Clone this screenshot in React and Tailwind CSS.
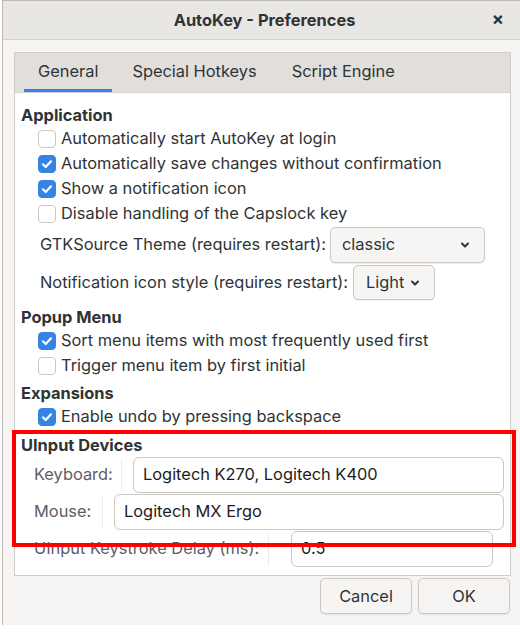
import React, { useState } from 'react';

const Check = ({ checked, onChange, label }) => (
  <label className="flex h-[25px] items-center pl-[17px] cursor-default">
    <span
      onClick={onChange}
      className={`flex h-[18px] w-[18px] items-center justify-center rounded-[4px] border ${
        checked ? 'border-[#3584e4] bg-[#3584e4]' : 'border-[#cdc7c2] bg-white'
      }`}
    >
      {checked && (
        <svg width="12" height="12" viewBox="0 0 12 12" fill="none">
          <path d="M2 6.3 4.7 9 10 3.3" stroke="white" strokeWidth="2.2" strokeLinecap="round" strokeLinejoin="round" />
        </svg>
      )}
    </span>
    <span className="ml-[5px]">{label}</span>
  </label>
);

const Chevron = () => (
  <svg width="12" height="12" viewBox="0 0 12 12" fill="none">
    <path d="M3 4.5 6 7.5 9 4.5" stroke="#2e3436" strokeWidth="2" strokeLinecap="round" strokeLinejoin="round" />
  </svg>
);

const Heading = ({ children, className = '' }) => (
  <div className={`flex h-[22px] items-center font-bold ${className}`}>{children}</div>
);

const Field = ({ label, value, labelW, entryLeft, entryW }) => (
  <div className="flex h-[37px] items-center pl-[13px]">
    <span className={`text-[#5e5c64] ${labelW}`}>{label}</span>
    <span className="h-[32px] w-px bg-[#ebebeb]" />
    <div
      className={`flex h-[36px] items-center rounded-[6px] border border-[#cdc7c2] bg-white px-[9px] text-[#1c1c1c] ${entryLeft} ${entryW}`}
    >
      {value}
    </div>
  </div>
);

export default function App() {
  const [opts, setOpts] = useState({
    autostart: false,
    autosave: true,
    notify: true,
    capslock: false,
    sortMenu: true,
    firstInitial: false,
    undo: true,
  });
  const toggle = (k) => setOpts((o) => ({ ...o, [k]: !o[k] }));

  return (
    <div className="relative h-[640px] w-[520px] overflow-hidden bg-white font-['Inter',sans-serif] text-[16.4px] text-[#2e3436]">
      <div className="ml-[2px] flex h-[625px] w-[520px] flex-col border-l border-t border-[#bdb8b3] bg-[#f6f5f4]">
        {/* header bar */}
        <div className="relative flex h-[39px] shrink-0 items-center justify-center border-b border-[#d6d1cd] bg-[#e9e7e4]">
          <span className="ml-[4px] text-[16.4px] font-bold text-[#2e3436]">AutoKey - Preferences</span>
          <span className="absolute right-[18px] top-[9px] text-[18px] font-bold leading-none">×</span>
        </div>

        <div className="flex flex-1 flex-col pl-[11px] pt-[12px]">
          {/* notebook */}
          <div className="flex h-[524px] w-[497px] flex-col border border-[#d2cdc8]">
            <div className="flex h-[40px] shrink-0 items-end border-b border-[#d8d3ce] bg-[#e1dedb] pl-[9px]">
              <div className="flex h-[39px] flex-col justify-center">
                <div className="flex flex-1 items-center px-[14px] text-[#2e3436]">General</div>
                <div className="h-[3px] bg-[#3584e4]" />
              </div>
              <div className="flex h-[39px] items-center pb-[3px] pl-[20px] pr-[9px] text-[#2e3436]">Special Hotkeys</div>
              <div className="flex h-[39px] items-center px-[26px] pb-[3px] text-[#2e3436]">Script Engine</div>
            </div>

            <div className="flex flex-1 flex-col bg-white pl-[6px] pt-[11px]">
              <Heading>Application</Heading>
              <Check checked={opts.autostart} onChange={() => toggle('autostart')} label="Automatically start AutoKey at login" />
              <Check checked={opts.autosave} onChange={() => toggle('autosave')} label="Automatically save changes without confirmation" />
              <Check checked={opts.notify} onChange={() => toggle('notify')} label="Show a notification icon" />
              <Check checked={opts.capslock} onChange={() => toggle('capslock')} label="Disable handling of the Capslock key" />

              <div className="flex h-[37px] items-center pl-[19px]">
                <span className="w-[290px]">GTKSource Theme (requires restart):</span>
                <div className="flex h-[36px] w-[155px] items-center justify-between rounded-[5px] border border-[#cdc7c2] bg-[#f6f5f4] pl-[11px] pr-[13px] shadow-[0_1px_1px_rgba(0,0,0,0.07)]">
                  classic
                  <Chevron />
                </div>
              </div>
              <div className="mt-[1px] flex h-[37px] items-center pl-[19px]">
                <span className="w-[313px]">Notification icon style (requires restart):</span>
                <div className="flex h-[35px] w-[82px] items-center gap-[5px] rounded-[5px] border border-[#cdc7c2] bg-[#f6f5f4] pl-[12px] shadow-[0_1px_1px_rgba(0,0,0,0.07)]">
                  Light
                  <Chevron />
                </div>
              </div>

              <Heading className="mt-[5px]">Popup Menu</Heading>
              <Check checked={opts.sortMenu} onChange={() => toggle('sortMenu')} label="Sort menu items with most frequently used first" />
              <Check checked={opts.firstInitial} onChange={() => toggle('firstInitial')} label="Trigger menu item by first initial" />

              <Heading className="mt-[4px]">Expansions</Heading>
              <Check checked={opts.undo} onChange={() => toggle('undo')} label="Enable undo by pressing backspace" />

              <Heading className="mt-[5px]">UInput Devices</Heading>
              <Field label="Keyboard:" value="Logitech K270, Logitech K400" labelW="w-[87px]" entryLeft="ml-[11px]" entryW="w-[371px]" />
              <Field label="Mouse:" value="Logitech MX Ergo" labelW="w-[68px]" entryLeft="ml-[11px]" entryW="w-[390px]" />
              <Field label="UInput Keystroke Delay (ms):" value="0.5" labelW="w-[234px]" entryLeft="ml-[22px]" entryW="w-[202px]" />
            </div>
          </div>

          <div className="mt-[2px] flex w-[496px] justify-end gap-[6px]">
            <button className="h-[36px] w-[92px] rounded-[5px] border border-[#cdc7c2] bg-[#f6f5f4] shadow-[0_1px_1px_rgba(0,0,0,0.08)]">Cancel</button>
            <button className="h-[36px] w-[92px] rounded-[5px] border border-[#cdc7c2] bg-[#f6f5f4] shadow-[0_1px_1px_rgba(0,0,0,0.08)]">OK</button>
          </div>
        </div>
      </div>

      {/* highlight frame */}
      <div className="pointer-events-none absolute left-[12px] top-[430px] h-[117px] w-[504px] border-4 border-[#ff0000]" />
    </div>
  );
}
